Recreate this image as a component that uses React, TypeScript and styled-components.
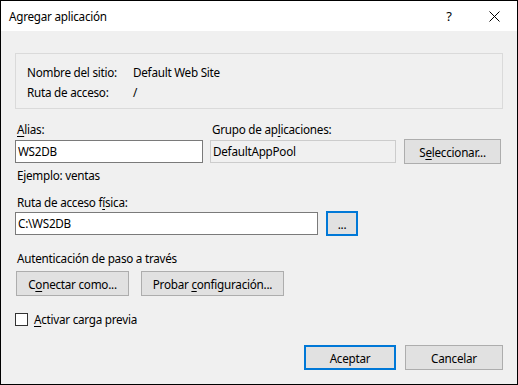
import React from "react";
import styled, { createGlobalStyle } from "styled-components";

const Global = createGlobalStyle`
  html, body { margin: 0; padding: 0; background: #ffffff; }
  body {
    font-family: "Noto Sans", "Open Sans", sans-serif;
    font-size: 11.7px;
    letter-spacing: -0.25px;
    color: #000000;
  }
  * { box-sizing: border-box; }
`;

const Window = styled.div`
  width: 518px;
  height: 385px;
  border: 1px solid #000000;
  background: #f0f0f0;
  display: flex;
  flex-direction: column;
`;

const TitleBar = styled.div`
  height: 30px;
  flex: none;
  background: #ffffff;
  display: flex;
  align-items: center;
`;

const Title = styled.span`
  flex: 1;
  padding-left: 8px;
  line-height: 16px;
`;

const TitleButton = styled.div<{ $w: number }>`
  width: ${(p) => p.$w}px;
  height: 30px;
  display: flex;
  align-items: center;
  justify-content: center;
  font-size: 13px;
`;

const Body = styled.div`
  flex: 1;
  padding: 22px 14px 0 14px;
  display: flex;
  flex-direction: column;
`;

const InfoBox = styled.div`
  border: 1px solid #dadada;
  padding: 10px 10px 8px 11px;
  display: grid;
  grid-template-columns: 106px auto;
  row-gap: 4px;
  line-height: 16px;
`;

const Text = styled.div<{ $mt?: number }>`
  line-height: 16px;
  padding-left: 2px;
  margin-top: ${(p) => p.$mt ?? 0}px;
  white-space: nowrap;
`;

const Key = styled.span`
  text-decoration: underline;
  text-underline-offset: 2px;
  text-decoration-thickness: 1px;
`;

const FieldsRow = styled.div`
  margin-top: 12px;
  display: flex;
  align-items: flex-end;
`;

const Field = styled.div<{ $w: number; $ml?: number }>`
  width: ${(p) => p.$w}px;
  margin-left: ${(p) => p.$ml ?? 0}px;
  display: flex;
  flex-direction: column;
  gap: 3px;
`;

const Input = styled.div<{ $w?: number; $disabled?: boolean }>`
  width: ${(p) => (p.$w ? `${p.$w}px` : "100%")};
  height: 23px;
  border: 1px solid ${(p) => (p.$disabled ? "#cccccc" : "#7a7a7a")};
  background: ${(p) => (p.$disabled ? "#f0f0f0" : "#ffffff")};
  padding: 0 2px;
  line-height: 21px;
  white-space: nowrap;
  overflow: hidden;
`;

const Button = styled.div<{ $w: number; $focus?: boolean; $ml?: number }>`
  width: ${(p) => p.$w}px;
  height: 25px;
  margin-left: ${(p) => p.$ml ?? 0}px;
  flex: none;
  background: #e1e1e1;
  border: ${(p) => (p.$focus ? "2px solid #0078d7" : "1px solid #adadad")};
  display: flex;
  align-items: center;
  justify-content: center;
  line-height: 16px;
  white-space: nowrap;
`;

const SideButton = styled(Button)`
  margin-bottom: -1px;
`;

const PathRow = styled.div`
  margin-top: 1px;
  height: 25px;
  display: flex;
  align-items: center;
`;

const ButtonRow = styled.div<{ $mt: number; $end?: boolean }>`
  margin-top: ${(p) => p.$mt}px;
  display: flex;
  justify-content: ${(p) => (p.$end ? "flex-end" : "flex-start")};
  padding-left: ${(p) => (p.$end ? 0 : 1)}px;
`;

const CheckRow = styled.div`
  margin-top: 15px;
  height: 16px;
  display: flex;
  align-items: center;
  gap: 6px;
  line-height: 16px;
`;

const CheckBox = styled.div`
  width: 13px;
  height: 13px;
  border: 1px solid #333333;
  background: #ffffff;
`;

export default function App() {
  return (
    <>
      <Global />
      <Window>
        <TitleBar>
          <Title>Agregar aplicación</Title>
          <TitleButton $w={46}>?</TitleButton>
          <TitleButton $w={45}>
            <svg width="11" height="11" viewBox="0 0 11 11">
              <path d="M0.5 0.5 L10.5 10.5 M10.5 0.5 L0.5 10.5" stroke="#000" strokeWidth="1" />
            </svg>
          </TitleButton>
        </TitleBar>
        <Body>
          <InfoBox>
            <span>Nombre del sitio:</span>
            <span>Default Web Site</span>
            <span>Ruta de acceso:</span>
            <span>/</span>
          </InfoBox>

          <FieldsRow>
            <Field $w={188}>
              <Text>
                <Key>A</Key>lias:
              </Text>
              <Input>WS2DB</Input>
            </Field>
            <Field $w={186} $ml={7}>
              <Text>
                Grupo de ap<Key>l</Key>icaciones:
              </Text>
              <Input $disabled>DefaultAppPool</Input>
            </Field>
            <SideButton $w={97} $ml={8}>
              <span>
                S<Key>e</Key>leccionar...
              </span>
            </SideButton>
          </FieldsRow>

          <Text $mt={4}>Ejemplo: ventas</Text>

          <Text $mt={11}>
            Ruta de acceso f<Key>í</Key>sica:
          </Text>
          <PathRow>
            <Input $w={303}>C:\WS2DB</Input>
            <Button $w={32} $focus $ml={8}>
              <span>...</span>
            </Button>
          </PathRow>

          <Text $mt={14}>Autenticación de paso a través</Text>
          <ButtonRow $mt={5}>
            <Button $w={113}>
              <span>
                C<Key>o</Key>nectar como...
              </span>
            </Button>
            <Button $w={143} $ml={12}>
              <span>
                Probar <Key>c</Key>onfiguración...
              </span>
            </Button>
          </ButtonRow>

          <CheckRow>
            <CheckBox />
            <span>
              <Key>A</Key>ctivar carga previa
            </span>
          </CheckRow>

          <ButtonRow $mt={18} $end>
            <Button $w={92} $focus>
              <span>Aceptar</span>
            </Button>
            <Button $w={98} $ml={9}>
              <span>Cancelar</span>
            </Button>
          </ButtonRow>
        </Body>
      </Window>
    </>
  );
}
